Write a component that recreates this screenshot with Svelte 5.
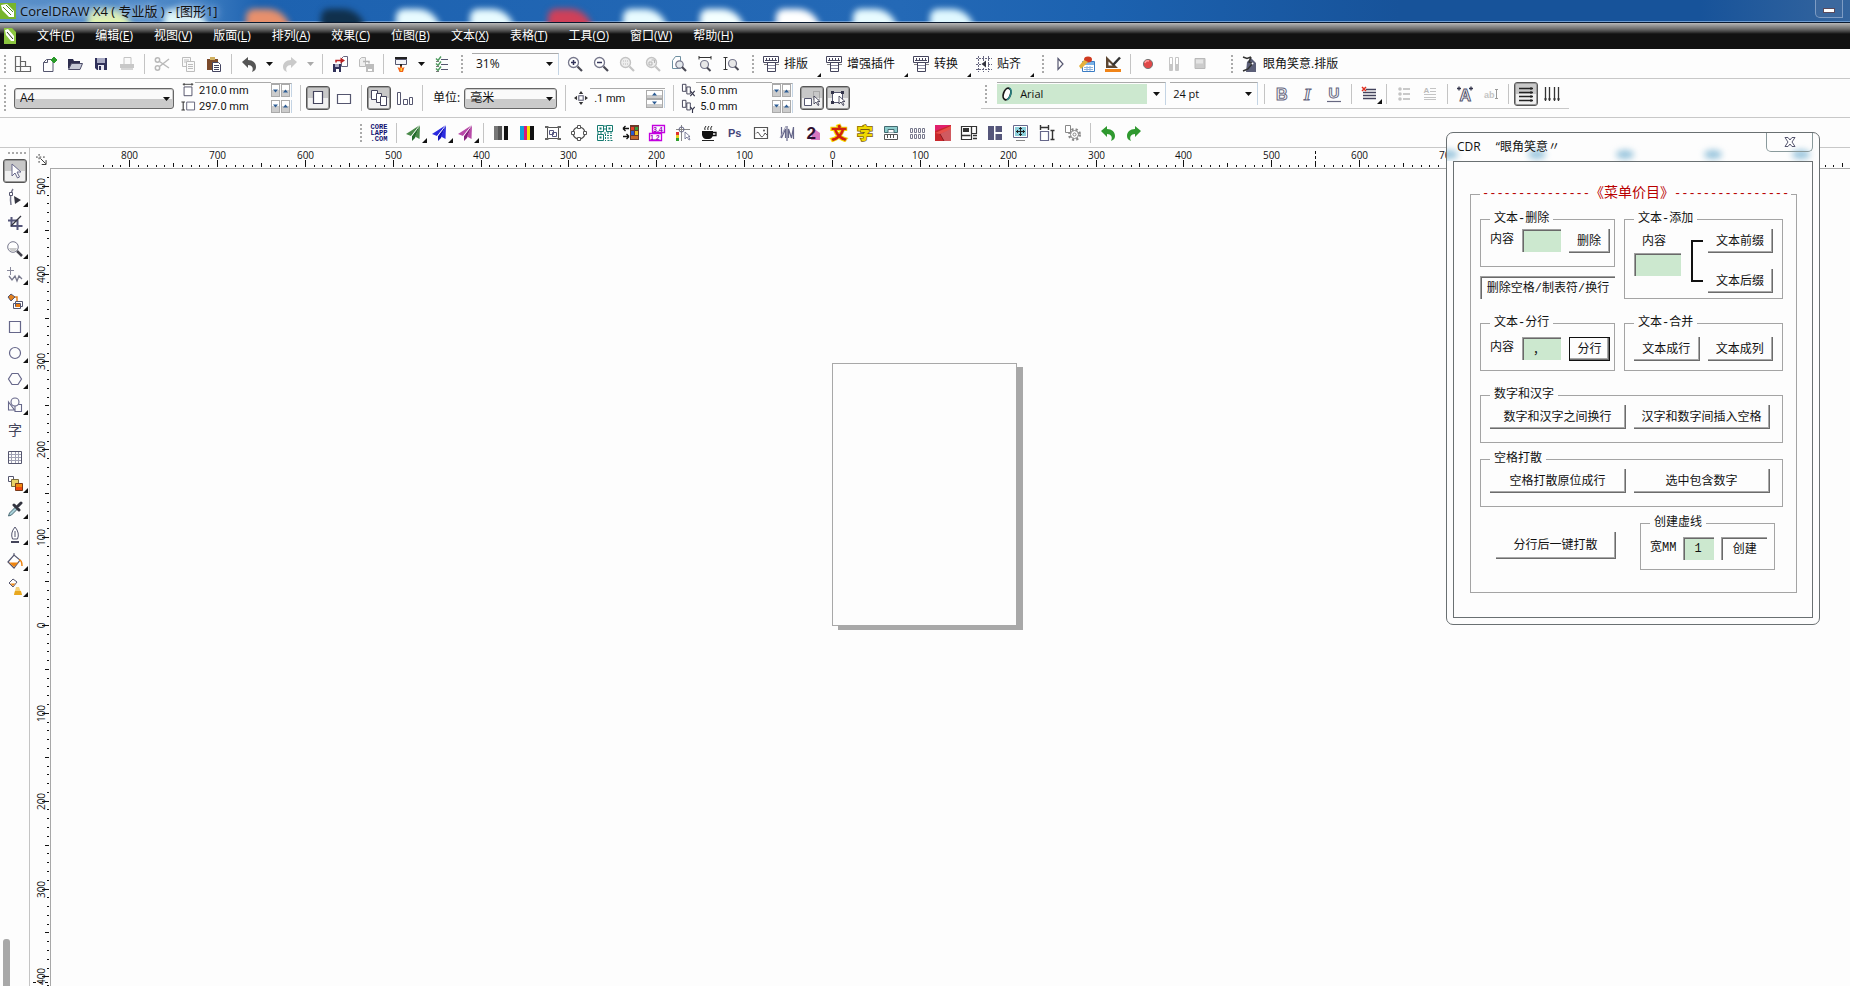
<script lang="ts">
    type Tool = { i?: string; t?: string; sep?: boolean; drop?: boolean; c?: boolean; on?: boolean };

    const sep: Tool = { sep: true };
    const drop: Tool = { drop: true };
    const b = (i: string, t: string, c = false, on = false): Tool => ({ i, t, c, on });

    const menus = [
        ['文件', 'F'], ['编辑', 'E'], ['视图', 'V'], ['版面', 'L'], ['排列', 'A'], ['效果', 'C'],
        ['位图', 'B'], ['文本', 'X'], ['表格', 'T'], ['工具', 'O'], ['窗口', 'W'], ['帮助', 'H']
    ];

    const standard = [
        b('layout', '版面'), b('new', '新建'), b('open', '打开'), b('save', '保存'), b('print', '打印'), sep,
        b('cut', '剪切'), b('copy', '复制'), b('paste', '粘贴'), sep,
        b('undo', '撤消'), drop, b('redo', '重做'), { ...drop, c: true }, sep,
        b('import', '导入'), b('export', '导出'), sep,
        b('launch', '应用程序启动器'), drop, b('checks', '选项')
    ];
    const zooms = [
        b('zoomin', '放大'), b('zoomout', '缩小'), b('zoomsel', '缩放选定范围'), b('zoomall', '缩放全部对象'),
        b('zoompage', '显示页面'), b('zoomw', '按页宽显示'), b('zoomh', '按页高显示')
    ];
    const macros = [['press', '排版'], ['press', '增强插件'], ['press', '转换'], ['snap', '贴齐']];
    const vba = [b('play', '播放'), b('vbedit', 'VBA 编辑器'), b('vbdesign', '设计模式'), sep, b('rec', '记录'), b('pause', '暂停'), b('stop', '停止')];
    const textTools = [
        sep, b('bold', '粗体'), b('italic', '斜体'), b('under', '下划线'), sep, b('align', '水平对齐', true), sep,
        b('bullets', '项目符号'), b('dropcap', '首字下沉'), sep, b('charfmt', '字符格式化'), b('edittext', '编辑文本'), sep,
        b('horz', '水平文本', false, true), b('vert', '垂直文本')
    ];
    const plugins = [
        b('planeg', '发送', true), b('planeb', '发送', true), b('planem', '发送', true), sep,
        b('grays', '灰度'), b('cmyk', 'CMYK'), b('group', '群组'), b('nodes', '节点'), b('qr', '二维码'), b('swap', '颜色替换'),
        b('nums', '编号'), b('guides', '辅助线'), b('coffee', '休息'), b('ps', 'Photoshop'), b('image', '图像'), b('mirror', '镜像'),
        b('two', '两色'), b('wen', '文字'), b('zi', '字体'), b('measure', '测量'), b('grid10', '阵列'), b('red', '色块'),
        b('impose', '拼版'), b('blocks', '排列'), b('screen', '屏幕'), b('size', '尺寸'), b('gear', '设置'), sep,
        b('gundo', '撤消'), b('gredo', '重做')
    ];
    const toolbox = [
        b('pick', '挑选', false, true), b('shape', '形状', true), b('crop', '裁剪', true), b('zoom', '缩放', true),
        b('freehand', '手绘', true), b('smartfill', '智能填充', true), b('rect', '矩形', true), b('ellipse', '椭圆形', true),
        b('polygon', '多边形', true), b('basic', '基本形状', true), b('texttool', '文本'), b('table', '表格'),
        b('blend', '交互式调和', true), b('dropper', '滴管', true), b('pen', '轮廓', true), b('bucket', '填充', true),
        b('ifill', '交互式填充', true)
    ];

    const lens = '<circle cx="6.5" cy="6.5" r="5" fill="#fff" stroke="#77788c" stroke-width="1.3"/><path d="M10.5 10.5l4.5 4.5" stroke="#4a4a55" stroke-width="2.2"/>';
    const lensOff = '<circle cx="6.5" cy="6.5" r="5" fill="#eee" stroke="#c4c4c4" stroke-width="1.4"/><path d="M10.5 10.5l4.5 4.5" stroke="#c4c4c4" stroke-width="2.2"/>';
    const plane = (a: string, d: string) => `<path d="M14 0L0 9l5 2z" fill="${a}"/><path d="M14 0L6 11v5l3-3z" fill="${d}"/><path d="M14 0L9 11.500l4.500 2.500z" fill="${a}"/><path d="M14 0L5.500 11" stroke="#fff" stroke-width=".7"/>`;
    const curve = 'M1 6l6-5v3c5 0 8 3 8 7 0 2-1 4-4 5 2-4 0-7-4-7v3z';

    const icons: Record<string, string> = {
        layout: '<path d="M.5 .5v15h15v-5h-10v-10zM5.500 5.500h5v5M.5 10.500h5v5" fill="none" stroke="#666" stroke-width="1.200"/>',
        new: '<path d="M2.500 6.500l3-3H12v12H2.500zM2.500 6.500h4v-3" fill="#fdfdfd" stroke="#55566f"/><path d="M10 4h6M13 1v6" stroke="#2a9a2a" stroke-width="2"/><path d="M11 2l4 4M15 2l-4 4" stroke="#2a9a2a"/>',
        open: '<path d="M1 13V3h5l1 2h6v3H5z" fill="#2d2d4e"/><path d="M1.500 13.500l3-6h11l-2.500 6z" fill="#c6c9d6" stroke="#4c4c68"/>',
        save: '<path d="M2 2h12v12H4l-2-2z" fill="#30315a"/><path d="M4 2h8v5H4z" fill="#a9abc4"/><path d="M5 9h6v5H5z" fill="#e8e8f2"/><path d="M6 10h2v4H6z" fill="#30315a"/>',
        print: '<path d="M5 1.500h7v7H5z" fill="#fafafa" stroke="#c4c4c4"/><path d="M1 8h14v4H1z" fill="#c8c8c8"/><path d="M2 13h12" stroke="#c8c8c8" stroke-width="1.500"/>',
        cut: '<g fill="none" stroke="#b9b9b9" stroke-width="1.500"><circle cx="3.500" cy="4" r="2.200"/><circle cx="3.500" cy="12" r="2.200"/><path d="M5.500 5.500L15 12M5.500 10.500L15 3"/></g>',
        copy: '<g fill="#fafafa" stroke="#bdbdbd"><path d="M2.500 1.500h8v9h-8z"/><path d="M6.500 5.500h8v10h-8z"/><path d="M4 4h5M4 6h2M8 8.500h5M8 10.500h5M8 12.500h5"/></g>',
        paste: '<path d="M1 3h11v11H1z" fill="#7b4a2b"/><path d="M4 1h5v3H4z" fill="#d0b060"/><path d="M6.500 6.500h6l2 2v7h-8z" fill="#fff" stroke="#444460"/><path d="M8 9.500h5M8 11.500h5M8 13.500h5" stroke="#444460"/>',
        undo: `<path d="${curve}" fill="#555"/>`,
        redo: `<path d="${curve}" fill="#cacaca" transform="translate(16 0) scale(-1 1)"/>`,
        gundo: `<path d="${curve}" fill="#2f992f"/>`,
        gredo: `<path d="${curve}" fill="#2f992f" transform="translate(16 0) scale(-1 1)"/>`,
        import: '<path d="M9.500 2.500l2-2h4v10H9.500z" fill="#fff" stroke="#666680"/><path d="M1 8h8v8H1z" fill="#30315a"/><path d="M3 8h4v3H3z" fill="#a9abc4"/><path d="M4 13h3v3H4z" fill="#fff"/><path d="M4 6.500V4.500h5" fill="none" stroke="#b22" stroke-width="1.500"/><path d="M8.500 1.500L13 4.500l-4.500 3z" fill="#b22"/>',
        export: '<path d="M1.500 3.500l2-2h4v9h-6z" fill="#eee" stroke="#bbb"/><path d="M8 8h8v8H8z" fill="#bdbdbd"/><path d="M10 13h4v2h-4z" fill="#fff"/><path d="M5 5.500h6v2" fill="none" stroke="#b5b5b5" stroke-width="1.500"/>',
        launch: '<path d="M2 1h12v2.500H2z" fill="#222"/><path d="M2.500 3.500h11v5h-11z" fill="#f4f4f8" stroke="#55566f"/><path d="M8 8v3" stroke="#222" stroke-width="2"/><path d="M4.500 11l2 1L8 9.500 9.500 12l2-1L10 16H6.500z" fill="#f2641a"/><path d="M7.500 12h1.500v3H7.500z" fill="#ffd23a"/>',
        checks: '<path d="M7 3.500h7M7 8.500h7M7 13.500h7" stroke="#55566f"/><path d="M2 2.500l2 2L7 .5M2 7.500l2 2 3-4M2 12.500l2 2 3-4" fill="none" stroke="#4d9a5d" stroke-width="1.400"/><path d="M2 5.500h3M2 10.500h3M2 15.500h3" stroke="#777"/>',
        zoomin: lens + '<path d="M4 6.500h5M6.500 4v5" stroke="#33345a" stroke-width="1.500"/>',
        zoomout: lens + '<path d="M4 6.500h5" stroke="#33345a" stroke-width="1.500"/>',
        zoomsel: lensOff + '<path d="M4 5h5M4 8h5" stroke="#bbb" stroke-dasharray="1 1"/>',
        zoomall: lensOff + '<path d="M4 6h3v3H4zM6.500 4h3v3" fill="none" stroke="#b5b5b5"/>',
        zoompage: '<path d="M1.500 4.500l3-4h5v12h-8z" fill="#fff" stroke="#6e8fa0"/><circle cx="8.500" cy="8.500" r="3.700" fill="#e4e8ec" stroke="#77788c" stroke-width="1.200"/><path d="M11 11l4 4" stroke="#4a4a55" stroke-width="2.200"/>',
        zoomw: '<path d="M2 1.500h12M2 0v3.500M14 0v3.500" stroke="#333"/><circle cx="7.500" cy="8.500" r="4" fill="#e8e8e8" stroke="#77788c" stroke-width="1.200"/><path d="M10 11.500l3.500 3.500" stroke="#4a4a55" stroke-width="2"/>',
        zoomh: '<path d="M2.500 1.500v12M.5 1.500h4M.5 13.500h4" stroke="#333"/><circle cx="9.500" cy="7.500" r="4" fill="#e8e8e8" stroke="#77788c" stroke-width="1.200"/><path d="M12 10.500l3.500 3.500" stroke="#4a4a55" stroke-width="2"/>',
        press: '<path d="M.5 .5h15v6H.5z" fill="#fff" stroke="#44445c"/><path d="M2 4.500h12M3.500 2v3M6.500 2v3M9.500 2v3M12.500 2v3" stroke="#44445c"/><path d="M4.500 6.500h8v9h-8z" fill="#fff" stroke="#44445c"/><path d="M5 9.500h7M5 12.500h7" stroke="#8a8aa0"/><path d="M1 8.500h3M13 8.500h3" stroke="#888"/>',
        snap: '<path d="M2.500 0v16M12.500 0v16M7.500 0v16M0 2.500h16M0 8.500h16M0 13.500h16" stroke="#666680" stroke-dasharray="2 1"/><path d="M5 5h6v6H5z" fill="#fff"/><path d="M10 4.500v7L5.500 8z" fill="#33343f"/>',
        play: '<path d="M5 2.500L10 8l-5 5.500z" fill="#fff" stroke="#55566f" stroke-width="1.200"/>',
        vbedit: '<path d="M3.500 5.500h12v10h-12z" fill="#fff" stroke="#3a7cc4"/><path d="M4 6h11v3H4z" fill="#7ab2e6"/><path d="M5 11.500h9M5 13.500h9M8 10v5M11 10v5" stroke="#8fb4dd"/><ellipse cx="9" cy="3.500" rx="4" ry="3" fill="#cf3a20"/><path d="M0 10l5-6 4 2-5 5-2 2z" fill="#e5b13c"/>',
        vbdesign: '<path d="M1 0v12h12zM3.500 5.500v4h4z" fill="#5c4632" fill-rule="evenodd"/><path d="M0 13h16v3H0z" fill="#f08418"/><path d="M8 9L15 1.500" stroke="#333" stroke-width="2.500"/>',
        rec: '<circle cx="8" cy="8" r="4.600" fill="#e04848" stroke="#777" stroke-width="1"/><path d="M5 7q1-3 4-2" stroke="#ff9c9c" fill="none" stroke-width="1.500"/>',
        pause: '<path d="M3.500 1.500h3v13h-3zM9.500 1.500h3v13h-3z" fill="#fff" stroke="#c6c6c6"/><path d="M4 8h2.500v6H4zM10 8h2.500v6H10z" fill="#c6c6c6"/>',
        stop: '<path d="M3 2.500h10v10H3z" fill="#ccc" stroke="#b9b9b9"/><path d="M4 3.500h7v4H4z" fill="#e4e4e4"/>',
        tag: '<path d="M5 6l4-4 5 5v9H4z" fill="#5c5f78"/><path d="M1 1l4 1.500L9 1M9 1l-2 5 3 1M1 15l5-2 4-5" stroke="#333" fill="none" stroke-width="1.500"/><circle cx="10.500" cy="7.500" r="1" fill="#fff"/>',
        wide: '<path d="M3.500 4.500h9v10h-9z" fill="#fff" stroke="#44445c"/><path d="M2 1.500h12M3.500 0v3M12.500 0v3" stroke="#333"/>',
        tall: '<path d="M6.500 3.500h9v9h-9z" fill="#fff" stroke="#55566f"/><path d="M2.500 3v10M.5 3.500h4M.5 12.500h4" stroke="#333" stroke-width="1.200"/>',
        portrait: '<path d="M3.500 1.500h9v12h-9z" fill="#fff" stroke="#44445c" stroke-width="1.200"/>',
        landscape: '<path d="M1.500 4.500h13v9h-13z" fill="#fff" stroke="#55566f" stroke-width="1.200"/>',
        pages: '<g fill="#fff" stroke="#44445c"><path d="M.5 .5h6v9h-6z"/><path d="M5.500 3.500h5v9h-5z"/><path d="M9.500 6.500h6v9h-6z"/></g>',
        align3: '<g fill="#fff" stroke="#55566f"><path d="M.5 2.500h3v12h-3z"/><path d="M6.500 9.500h4v5h-4z"/><path d="M12.500 7.500h3v7h-3z"/></g>',
        nudge: '<path d="M5.500 5.500h5v5h-5z" fill="#fff" stroke="#55566f" stroke-width="1.200"/><path d="M8 0l2.500 3.500h-5zM8 16l2.500-3.500h-5zM0 8l3.500-2.500v5zM16 8l-3.500-2.500v5z" fill="#333"/>',
        dupx: '<path d="M.5 1.500h4v8h-4zM5.500 4.500h4v8h-4z" fill="#fff" stroke="#33344a"/><path d="M9.500 9l5 6M14.500 9l-5 6" stroke="#33344a" stroke-width="1.300"/>',
        dupy: '<path d="M.5 1.500h4v8h-4zM5.500 4.500h4v8h-4z" fill="#fff" stroke="#33344a"/><path d="M9.500 9l2.500 3 2.500-3M12 12v4" fill="none" stroke="#33344a" stroke-width="1.300"/>',
        dynsel: '<path d="M.5 8.500h7v7h-7z" fill="#fff" stroke="#55566f"/><path d="M9.500 1.500h6v8h-6z" fill="none" stroke="#888" stroke-dasharray="1 1"/><path d="M10 6v8l2-2 2 3.500 1-.5-1.500-3.500H16z" fill="#fff" stroke="#33344a" stroke-width=".8"/>',
        bound: '<path d="M2.500 2.500h10v10h-10z" fill="#fff" stroke="#55566f"/><path d="M1 1h3v3H1zM11 1h3v3h-3zM1 11h3v3H1z" fill="#33344a"/><path d="M9 6v8l2-2 2 3.500 1-.5-1.500-3.500H15z" fill="#fff" stroke="#33344a" stroke-width=".8"/>',
        oglyph: '<ellipse cx="7" cy="8" rx="3.500" ry="6" transform="rotate(20 7 8)" fill="#fff" stroke="#1a1a1a" stroke-width="1.800"/><path d="M9.500 2c3 2 1.500 9-2.500 12" stroke="#2a8a8a" fill="none" stroke-width="1.500"/>',
        bold: '<text x="2" y="14" font-family="Liberation Sans" font-weight="bold" font-size="16" fill="#fff" stroke="#666780">B</text>',
        italic: '<text x="4" y="14" font-family="Liberation Serif" font-style="italic" font-weight="bold" font-size="17" fill="#fff" stroke="#666780">I</text>',
        under: '<text x="2.500" y="12" font-family="Liberation Sans" font-weight="bold" font-size="15" fill="#fff" stroke="#666780">U</text><path d="M1 15.500h14" stroke="#666780" stroke-width="1.200"/>',
        align: '<path d="M5 3.500h10M2 6.500h13M2 9.500h13M2 12.500h13" stroke="#44445c" stroke-width="1.500"/><path d="M1 1l4 4M5 1L1 5" stroke="#e03020" stroke-width="1.500"/>',
        bullets: '<path d="M7 3h7M7 8h7M7 13h7" stroke="#c9c9c9" stroke-width="2"/><g fill="#c4c4c4"><circle cx="4" cy="3" r="1.800"/><circle cx="4" cy="8" r="1.800"/><circle cx="4" cy="13" r="1.800"/></g>',
        dropcap: '<path d="M8 2.500h6M8 5.500h6M2 8.500h12M2 11.500h12M2 13.500h12" stroke="#c4c4c4"/><text x="1.500" y="7" font-family="Liberation Sans" font-weight="bold" font-size="8" fill="#bbb">A</text>',
        charfmt: '<text x="2.500" y="15" font-family="Liberation Sans" font-weight="bold" font-size="16" fill="#fff" stroke="#55566f">A</text><path d="M0 2.500h4M2 .5v4M12 2.500h4M14 .5v4" stroke="#33344a" stroke-width="1.300"/>',
        edittext: '<text x="1" y="12" font-family="Liberation Sans" font-weight="bold" font-size="9" fill="#c4c4c4">ab</text><path d="M13.500 3v10M12 3.500h3M12 12.500h3" stroke="#999"/>',
        horz: '<path d="M1 2.500h14M1 6.500h14M1 10.500h14M1 14.500h14" stroke="#222" stroke-width="1.300"/><path d="M13 1v3M13 5v3M13 9v3M13 13v3" stroke="#222"/>',
        vert: '<path d="M1.500 1v14M5.500 1v14M10.500 1v14M14.500 1v14" stroke="#333" stroke-width="1.300"/><path d="M0 13h3M4 13h3M9 13h3M13 13h3" stroke="#333"/>',
        planeg: plane('#4a8a4a', '#246b2c'),
        planeb: plane('#2b2be0', '#1414b8'),
        planem: plane('#b84aa8', '#86217c'),
        grays: '<path d="M1 1h5v14H1z" fill="#777"/><path d="M5 1h4v14H5z" fill="#555"/><path d="M9 1h2v14H9z" fill="#eee"/><path d="M11 1h4v14h-4z" fill="#111"/>',
        cmyk: '<path d="M1 1h4v14H1z" fill="#10a0d8"/><path d="M5 1h3v14H5z" fill="#d81878"/><path d="M8 1h3v14H8z" fill="#f4e400"/><path d="M11 1h4v14h-4z" fill="#111"/>',
        group: '<path d="M2.500 2.500h11v11h-11z" fill="#fff" stroke="#555"/><path d="M4.500 5.500h4v4h-4zM7.500 7.500h4v4h-4z" fill="#fff" stroke="#55567f"/><path d="M0 1h3.500v2H0zM12.500 1H16v2h-3.500zM0 13h3.500v2H0zM12.500 13H16v2h-3.500z" fill="#666"/>',
        nodes: '<circle cx="8" cy="8" r="6" fill="#fff" stroke="#555" stroke-width="1.200"/><g fill="#fff" stroke="#555"><path d="M6.500 .5h3v3h-3zM6.500 12.500h3v3h-3zM.5 6.500h3v3h-3zM12.500 6.500h3v3h-3z"/></g>',
        qr: '<g fill="none" stroke="#147a70"><path d="M.5 .5h6v6h-6zM9.500 .5h6v6h-6zM.5 9.500h6v6h-6z"/><path d="M2.500 3.500h2M11.500 3.500h2M2.500 12.500h2" stroke-width="2"/><path d="M8 0v5M0 8h6M7 8h9M8.500 9v7M10 10.500h6M10 13h6M10.500 15.500h6" stroke-dasharray="2 1"/></g>',
        swap: '<path d="M7 0h9v15H7z" fill="#6b3a2a"/><path d="M8 2h3v3H8z" fill="#e8402a"/><path d="M12 2h3v3h-3z" fill="#3a9a3a"/><path d="M8 6h3v4H8z" fill="#2a5ad0"/><path d="M12 6h3v4h-3z" fill="#f0c020"/><path d="M8 11h7v3H8z" fill="#c86a2a"/><path d="M0 3.500h6M0 3.500L2.500 1M0 3.500L2.500 6M0 11.500h6M6 11.500L3.500 9M6 11.500L3.500 14" stroke="#111" stroke-width="1.300" fill="none"/>',
        nums: '<path d="M3.500 .5h12v7h-12zM.5 8.500h12v7H.5z" fill="#fff" stroke="#c400e0" stroke-width="1.300"/><text x="4" y="7" font-family="Liberation Sans" font-weight="bold" font-size="7" fill="#a000c0">3.4</text><text x="1" y="15" font-family="Liberation Sans" font-weight="bold" font-size="7" fill="#a000c0">1.2</text>',
        guides: '<path d="M6.500 0v16M1 4.500h14" stroke="#888"/><circle cx="6.500" cy="4.500" r="2.500" fill="none" stroke="#66678a"/><path d="M1 7h3v3H1z" fill="#e03030"/><path d="M1 10h3v3H1z" fill="#e8d020"/><path d="M1 13h3v3H1z" fill="#30a030"/><path d="M10 7v7l2-2 2 3 1-.5-1.500-3H15z" fill="#fff" stroke="#66678a" stroke-width=".8"/>',
        coffee: '<path d="M1 6h11v4q-1 4-4 4H5q-3 0-4-4z" fill="#111"/><path d="M12 7.500h3v3h-4" fill="none" stroke="#111" stroke-width="1.300"/><path d="M1 15.500h12M4 5q-1-2 1-4M7 5q-1-2 1-4M10 5q-1-2 1-4" stroke="#222" fill="none"/>',
        ps: '<text x="1" y="12" font-family="Liberation Sans" font-weight="bold" font-size="11" fill="#44457a">Ps</text>',
        image: '<path d="M1.500 2.500h13v11h-13z" fill="#fff" stroke="#555" stroke-width="1.200"/><path d="M3 8.500q2-3 4 1.500t5-2l2 2" fill="none" stroke="#555"/><circle cx="11" cy="5.500" r="1" fill="#555"/>',
        mirror: '<path d="M2.500 2v11l4-9v9M8 1v15M9.500 13V4l3 9 2-11v12" fill="none" stroke="#66678a" stroke-width="1.200"/><path d="M1 13l6-12" stroke="#a0a0b8"/>',
        two: '<path d="M8 3l7 5v7H6z" fill="#d878c0"/><text x="1.500" y="14" font-family="Liberation Sans" font-weight="bold" font-size="17" fill="#301030">2</text>',
        wen: '<text x="0" y="14" font-family="Noto Sans CJK SC" font-weight="900" font-size="16" fill="#d02010" stroke="#f4d800" stroke-width="2" paint-order="stroke">文</text>',
        zi: '<text x="0" y="14" font-family="Noto Sans CJK SC" font-weight="900" font-size="16" fill="#f0d800" stroke="#7a5c10" stroke-width="1.500" paint-order="stroke">字</text>',
        measure: '<path d="M1.500 1.500h13v6h-13z" fill="#8ccccc" stroke="#446a70"/><path d="M5 7.500v-3h6v3" fill="#fff" stroke="#446a70"/><path d="M1.500 9.500h13v5h-13z" fill="#fff" stroke="#555"/><path d="M4.500 10v3M7.500 10v3M10.500 10v3" stroke="#555"/>',
        grid10: '<g fill="#fff" stroke="#77788c"><path d="M1.500 3.500h2v4h-2zM5.500 3.500h2v4h-2zM9.500 3.500h2v4h-2zM13.500 3.500h2v4h-2zM1.500 9.500h2v4h-2zM5.500 9.500h2v4h-2zM9.500 9.500h2v4h-2zM13.500 9.500h2v4h-2z"/></g>',
        red: '<path d="M0 0h16v16H0z" fill="#c8282c"/><path d="M0 0h16L0 6z" fill="#e0206c"/><path d="M0 8L16 1v4L5 9z" fill="#e8504a"/><path d="M5 9l11-5v12H9z" fill="#d05a60"/><path d="M5 9l4 7" stroke="#8a1a20"/>',
        impose: '<path d="M.5 1.500h15v7h-5v6H.5z" fill="#fff" stroke="#333" stroke-width="1.200"/><path d="M2 3h6v4H2z" fill="#333"/><path d="M10.500 2v6M.5 10.500h9M12 10.500h4M12 13.500h4" stroke="#333" stroke-width="1.300"/>',
        blocks: '<path d="M1 1h6v14H1zM8.500 1H15v6H8.500zM8.500 9H15v6H8.500z" fill="#55567a"/>',
        screen: '<path d="M.5 .5h14v12H.5z" fill="#fff" stroke="#66678a"/><path d="M2 2h11v9H2z" fill="#8cd0dc"/><path d="M7.500 2v9M3 6.500h9M6 3.500h3M6 9.500h3M4.500 5v3M10.500 5v3" stroke="#222"/><path d="M3 15.500h9" stroke="#888"/>',
        size: '<path d="M1.500 6.500h8v9h-8z" fill="#fff" stroke="#66678a" stroke-width="1.200"/><path d="M1 2.500h9M1.500 0v5M9.500 0v5M13.500 5v10M11.500 5.500h4M11.500 14.500h4" stroke="#333" stroke-width="1.400"/>',
        gear: '<circle cx="9.500" cy="9.500" r="5" fill="#fff" stroke="#888" stroke-width="3" stroke-dasharray="2 2"/><circle cx="9.500" cy="9.500" r="4" fill="#fff" stroke="#888"/><path d="M.5 .5h5v7h-5z" fill="#fff" stroke="#888"/><circle cx="9.500" cy="9.500" r="1.500" fill="none" stroke="#888"/>',
        pick: '<path d="M5 1v12l3-3 2.500 5 2-1L10 9h4z" fill="#fff" stroke="#66678a"/>',
        shape: '<path d="M6 0C3 4 3 9 4 16" fill="none" stroke="#77788c" stroke-width="1.500"/><path d="M2.500 3.500h3v3h-3z" fill="#fff" stroke="#55566f"/><path d="M7 7l7 4-6 4z" fill="#33343f"/>',
        crop: '<path d="M4.500 2v9h11M1 5.500h9.500V15" fill="none" stroke="#55567a" stroke-width="2"/><path d="M4 11L14 1" stroke="#33343f" stroke-width="1.200"/>',
        zoom: '<circle cx="6" cy="6" r="5.300" fill="#fff" stroke="#77788c"/><path d="M2 7h8q-1 3.500-4 3.500T2 7z" fill="#ccc"/><path d="M10 10l5 5" stroke="#44444e" stroke-width="2.500"/>',
        freehand: '<path d="M3.500 0v8M0 3.500h7" stroke="#88899c"/><path d="M2 9l3 4 3-4 2 5 2-5 3 3" fill="none" stroke="#77788c" stroke-width="1.300"/>',
        smartfill: '<path d="M1 4l3-3 4 3-4 4z" fill="#e08020" stroke="#55566f"/><path d="M8 4h2v5" fill="none" stroke="#e08020" stroke-width="1.500"/><path d="M8.500 8.500h7v5h-7zM6.500 10.500h7v5h-7z" fill="#fff" stroke="#55566f"/><path d="M9 11h4v3H9z" fill="#e87a10"/>',
        rect: '<path d="M2.500 2.500h11v11h-11z" fill="#fdfdfd" stroke="#66678a" stroke-width="1.200"/>',
        ellipse: '<circle cx="8" cy="8" r="5.500" fill="#fdfdfd" stroke="#66678a" stroke-width="1.200"/>',
        polygon: '<path d="M5 2.500h6L14.500 8 11 13.500H5L1.500 8z" fill="#fdfdfd" stroke="#66678a" stroke-width="1.200"/>',
        basic: '<g fill="#fdfdfd" stroke="#66678a" stroke-width="1.100"><path d="M1.500 5l6 8h-6z"/><path d="M8 7.500h6.500v7H8z"/><circle cx="8" cy="5" r="4"/></g>',
        texttool: '<text x="1" y="12" font-family="Noto Sans CJK SC" font-size="14" fill="#44455a">字</text>',
        table: '<path d="M1.500 2.500h13v12h-13z" fill="none" stroke="#55566f"/><path d="M2 5.500h12M2 8.500h12M2 11.500h12M4.500 3v11M8.500 3v11M11.500 3v11" fill="none" stroke="#a0a1b4"/>',
        blend: '<path d="M1.500 1.500h5v5h-5z" fill="#fff" stroke="#55566f"/><path d="M4.500 4.500h7v7h-7z" fill="#e8d468" stroke="#7a6a3a"/><path d="M8.500 8.500h7v7h-7z" fill="#f04a10" stroke="#7a3a1a"/><path d="M9 9h6v3H9z" fill="#f08a10"/>',
        dropper: '<path d="M1.500 15l1-3 6-6 2 2-6 6z" fill="#a8d0d8" stroke="#4a6a74"/><path d="M7 4l5 5M10 6l4-4" stroke="#33343f" stroke-width="3" stroke-linecap="round"/>',
        pen: '<path d="M8 0q5 6 2.500 12h-5Q3 6 8 0z" fill="#fff" stroke="#55566f"/><path d="M8 4v6" stroke="#55566f"/><path d="M4 14h8v2H4z" fill="#44455a"/>',
        bucket: '<path d="M1 9l6-7 6 5-6 8z" fill="#fff" stroke="#55566f" stroke-width="1.200"/><path d="M2 9.500h9.500L7 14z" fill="#ee8410"/><path d="M12 7q3 0 3 6" fill="none" stroke="#ee8410" stroke-width="1.500"/><path d="M7 2V0" stroke="#55566f"/>',
        ifill: '<path d="M2 4l4-4 4 3-4 5z" fill="#fff" stroke="#55566f"/><path d="M3 4.500h5.500L6 7z" fill="#ee8410"/><path d="M9 8h3l3 8H7z" fill="#f6d27a"/><path d="M8 12h6l1 4H7z" fill="#e8a820"/>',
        origin: '<path d="M0 3.500h12M3.500 0v12" stroke="#222" stroke-dasharray="2 2"/><path d="M5 5l6 6M11.500 7v5h-5" stroke="#222" fill="none"/>'
    };

    // ruler marks, one every 10 mm; zero sits on the page's bottom left corner
    const step = 8.785;
    const xZero = 781;
    const yZero = 456;
    let width = $state(0);
    let height = $state(0);

    const range = (from: number, to: number) => Array.from({ length: to - from + 1 }, (_, k) => from + k);
    const hMarks = $derived(
        range(-83, Math.floor((width - xZero) / step)).map((n) => ({ n, p: Math.round(xZero + n * step) + 0.5 }))
    );
    const vMarks = $derived(
        range(-Math.floor((height - yZero) / step), 51).map((n) => ({ n, p: Math.round(yZero - n * step) + 0.5 }))
    );
    const len = (n: number) => (n % 10 === 0 ? 7 : n % 5 === 0 ? 4 : 2);

    const glows = [
        ['#e4f4b0', 110], ['#e4f8f8', 186], ['#e8906c', 268], ['#10304c', 343], ['#e8fbff', 418],
        ['#e8fbff', 492], ['#d04058', 570], ['#e8fbff', 645], ['#f4ffff', 722], ['#ffffff', 798], ['#e8fbff', 875], ['#e0f8ff', 952]
    ];

    let paper = $state('A4');
    let unit = $state('毫米');
    let zoom = $state('31%');
    let removeText = $state('');
    let addText = $state('');
    let splitText = $state('，');
    let dash = $state('1');
</script>

{#snippet icon(name: string)}
    <svg class="icon" viewBox="0 0 16 16" aria-hidden="true">{@html icons[name]}</svg>
{/snippet}

{#snippet caret()}
    <svg class="caret" viewBox="0 0 7 4" aria-hidden="true"><path d="M0 0h7L3.500 4z" /></svg>
{/snippet}

{#snippet tools(list: Tool[])}
    {#each list as t}
        {#if t.sep}
            <span class="sep"></span>
        {:else if t.drop}
            <button class="drop" class:off={t.c} aria-label="更多">{@render caret()}</button>
        {:else}
            <button class="tool" class:on={t.on} class:corner={t.c} aria-label={t.t}>{@render icon(t.i ?? '')}</button>
        {/if}
    {/each}
{/snippet}

{#snippet spin()}
    <span class="spin">
        <button aria-label="减少"><svg viewBox="0 0 7 4"><path d="M0 0h7L3.500 4z" /></svg></button>
        <button aria-label="增加"><svg viewBox="0 0 7 4"><path d="M0 4h7L3.500 0z" /></svg></button>
    </span>
{/snippet}

<div class="app">
    <header class="title">
        {#each glows as [color, x]}
            <i class="glow" style="left: {x}px; background: {color}"></i>
        {/each}
        <svg class="logo" viewBox="0 0 16 16" aria-hidden="true"><path d="M0 0h16v16H0z" fill="#76b52c" /><path d="M1 2l6-1 7 7v6H9L2 7z" fill="#fff" /><path d="M3 4l8 8M6 2l7 7" stroke="#4d8a1c" /></svg>
        <h1>CorelDRAW X4 ( 专业版 ) - [图形1]</h1>
        <button class="min" aria-label="最小化"></button>
    </header>

    <nav class="menu">
        <svg class="doc" viewBox="0 0 12 16" aria-hidden="true"><path d="M0 0h8l4 4v12H0z" fill="#8cc63f" /><path d="M1 2l3-1 6 7v5H7L2 7z" fill="#fff" /><path d="M3 4l6 7" stroke="#2c3a1a" /></svg>
        {#each menus as [name, key]}
            <button>{name}(<u>{key}</u>)</button>
        {/each}
    </nav>

    <div class="bar">
        <span class="grip"></span>
        {@render tools(standard)}
        <span class="grip near"></span>
        <label class="field zoomsel">
            <select bind:value={zoom} aria-label="缩放级别"><option>31%</option><option>100%</option></select>
            {@render caret()}
        </label>
        {@render tools(zooms)}
        <span class="grip next"></span>
        {#each macros as [i, name]}
            <button class="macro">{@render icon(i)}{name}</button>
        {/each}
        <span class="grip next"></span>
        {@render tools(vba)}
        <span class="grip far"></span>
        <button class="macro plain">{@render icon('tag')}眼角笑意.排版</button>
    </div>

    <div class="bar props">
        <span class="grip tall"></span>
        <label class="combo paper">
            <select bind:value={paper} aria-label="纸张类型"><option>A4</option><option>A3</option></select>
            {@render caret()}
        </label>
        <div class="pair">
            <label>{@render icon('wide')}<input value="210.0 mm" aria-label="宽度" />{@render spin()}</label>
            <label>{@render icon('tall')}<input value="297.0 mm" aria-label="高度" />{@render spin()}</label>
        </div>
        {@render tools([sep, b('portrait', '纵向', false, true), b('landscape', '横向'), sep, b('pages', '所有页面', false, true), b('align3', '当前页面'), sep])}
        <label class="unit" for="unit">单位:</label>
        <div class="combo">
            <select id="unit" bind:value={unit}><option>毫米</option><option>英寸</option></select>
            {@render caret()}
        </div>
        <span class="sep wide"></span>
        <label class="nudge">
            {@render icon('nudge')}
            <span class="box"><input value=".1 mm" aria-label="微调偏移" />
                <span class="spin up">
                    <button aria-label="增加"><svg viewBox="0 0 7 4"><path d="M0 4h7L3.500 0z" /></svg></button>
                    <button aria-label="减少"><svg viewBox="0 0 7 4"><path d="M0 0h7L3.500 4z" /></svg></button>
                </span>
            </span>
        </label>
        <span class="sep wide"></span>
        <div class="pair">
            <label>{@render icon('dupx')}<input value="5.0 mm" aria-label="再制距离 X" />{@render spin()}</label>
            <label>{@render icon('dupy')}<input value="5.0 mm" aria-label="再制距离 Y" />{@render spin()}</label>
        </div>
        <span class="space"></span>
        {@render tools([b('dynsel', '动态选择', false, true), b('bound', '视为已填充', false, true)])}

        <div class="textbar">
            <span class="grip"></span>
            <label class="field font">
                <span class="green">{@render icon('oglyph')}<select aria-label="字体"><option>Arial</option></select></span>
                {@render caret()}
            </label>
            <label class="field pt">
                <select aria-label="字号"><option>24 pt</option></select>
                {@render caret()}
            </label>
            {@render tools(textTools)}
        </div>
    </div>

    <div class="bar plugins">
        <span class="grip"></span>
        <button class="tool corelapp">CORE<br />LAPP<br />.COM</button>
        {@render tools([sep, ...plugins])}
    </div>

    <main>
        <aside class="toolbox">
            <span class="grip flat"></span>
            {@render tools(toolbox)}
            <span class="scroll"></span>
        </aside>
        <div class="origin">{@render icon('origin')}</div>
        <svg class="hruler" aria-hidden="true">
            {#each hMarks as m}
                <path d="M{m.p} {19 - len(m.n)}V19" />
                {#if m.n % 10 === 0}<text x={m.p} y="11">{Math.abs(m.n * 10)}</text>{/if}
            {/each}
            <path d="M1264.500 3V19" stroke-dasharray="3 2" />
        </svg>
        <svg class="vruler" aria-hidden="true">
            {#each vMarks as m}
                <path d="M{19 - len(m.n)} {m.p}H19" />
                {#if m.n % 10 === 0}<text transform="translate(15 {m.p}) rotate(-90)">{Math.abs(m.n * 10)}</text>{/if}
            {/each}
            <path d="M3 813.500H19" stroke-dasharray="3 3" />
        </svg>
        <section class="canvas" bind:clientWidth={width} bind:clientHeight={height}><div class="page"></div></section>
    </main>

    <section class="dialog" aria-label="CDR 眼角笑意">
        <header>
            {#each [6, 94, 182, 270, 358] as x}<i style="left: {x}px"></i>{/each}
            <h2>CDR <span>“眼角笑意〃</span></h2>
            <button class="close" aria-label="关闭"><svg viewBox="0 0 12 10"><path d="M1 .5h3l2 2.500 2-2.500h3L8 5l3 4.500H8L6 7 4 9.500H1L4 5z" fill="#fff" stroke="#55566f" /></svg></button>
        </header>
        <div class="client">
            <fieldset class="frame">
                <legend><span>---------------</span>《菜单价目》<span>----------------</span></legend>
                <div class="cols">
                    <div class="left">
                        <fieldset>
                            <legend>文本-删除</legend>
                            <label for="rm">内容</label><input id="rm" bind:value={removeText} /><button>删除</button>
                        </fieldset>
                        <button class="sunk">删除空格/制表符/换行</button>
                    </div>
                    <fieldset class="add">
                        <legend>文本-添加</legend>
                        <div class="stack"><label for="add">内容</label><input id="add" bind:value={addText} /></div>
                        <span class="bracket"></span>
                        <div class="stack far"><button>文本前缀</button><button>文本后缀</button></div>
                    </fieldset>
                </div>
                <div class="cols low">
                    <fieldset>
                        <legend>文本-分行</legend>
                        <label for="split">内容</label><input id="split" bind:value={splitText} /><button class="default">分行</button>
                    </fieldset>
                    <fieldset>
                        <legend>文本-合并</legend>
                        <button>文本成行</button><button>文本成列</button>
                    </fieldset>
                </div>
                <fieldset class="even">
                    <legend>数字和汉字</legend>
                    <button>数字和汉字之间换行</button><button>汉字和数字间插入空格</button>
                </fieldset>
                <fieldset class="even tight">
                    <legend>空格打散</legend>
                    <button>空格打散原位成行</button><button>选中包含数字</button>
                </fieldset>
                <div class="last">
                    <button>分行后一键打散</button>
                    <fieldset>
                        <legend>创建虚线</legend>
                        <label for="dash">宽MM</label><input id="dash" bind:value={dash} /><button class="sunk">创建</button>
                    </fieldset>
                </div>
            </fieldset>
        </div>
    </section>
</div>

<style>
    :global(body) {
        margin: 0;
        background: #fdfdfd;
    }

    .app {
        position: relative;
        display: flex;
        flex-direction: column;
        height: 100vh;
        overflow: hidden;
        background: #fdfdfd;
        color: #111;
        font: 12px/16px "Open Sans", "Noto Sans CJK SC", sans-serif;
    }

    button, input, select {
        box-sizing: border-box;
        margin: 0;
        padding: 0;
        border: 0;
        background: none;
        color: inherit;
        font: inherit;
        appearance: none;
        border-radius: 0;
        min-width: 0;
    }

    .icon {
        display: block;
        flex: none;
        width: 16px;
        height: 16px;
        overflow: visible;
    }

    .caret {
        flex: none;
        width: 7px;
        height: 4px;
        fill: #111;
    }

    /* title bar */
    .title {
        position: relative;
        display: flex;
        align-items: center;
        height: 22px;
        flex: none;
        overflow: hidden;
        background: linear-gradient(90deg, #5b8fc8 0, #4a86c6 180px, #1d62b0 260px, #2469b6 900px, #1c62b0 1100px, #17539a 1400px, #17539a 1700px, #35659e 100%);
        border-bottom: 1px solid #0a1a30;
        box-shadow: inset 0 -1px #6d9bd0;
    }

        .title h1 {
            position: relative;
            margin: 0 0 0 4px;
            font-size: 13px;
            font-weight: 400;
            text-shadow: 0 0 6px #bcd4ee, 0 0 10px #a8c8ea;
        }

    .glow {
        position: absolute;
        top: 9px;
        width: 44px;
        height: 22px;
        margin-left: -22px;
        border-radius: 8px 22px 0 0;
        filter: blur(3px);
    }

    .logo {
        position: relative;
        width: 16px;
        height: 16px;
    }

    .min {
        position: relative;
        align-self: flex-start;
        width: 28px;
        height: 18px;
        margin-left: auto;
        margin-right: 7px;
        border: 1px solid #7e9cc4;
        border-top: 0;
        border-radius: 0 0 0 5px;
        background: #3c689e;
    }

        .min::after {
            content: "";
            display: block;
            width: 10px;
            height: 3px;
            margin: 4px auto 0;
            background: #fff;
            border: 1px solid #5a4a5c;
        }

    .menu {
        display: flex;
        align-items: center;
        gap: 21px;
        height: 26px;
        flex: none;
        padding-left: 4px;
        background: linear-gradient(#b8b8b8 0, #909090 3px, #6c6c6c 6px, #3a3a3a 9px, #111 11px);
        color: #fff;
    }

    .doc {
        width: 12px;
        height: 16px;
    }

    /* toolbars */
    .bar {
        display: flex;
        align-items: center;
        height: 29px;
        flex: none;
        border-bottom: 1px solid #c8c8c8;
    }

    .props {
        height: 38px;
    }

    .plugins {
        padding-left: 356px;
    }

    .grip {
        flex: none;
        width: 2px;
        height: 18px;
        margin: 0 4px;
        background: repeating-linear-gradient(#aaa 0 2px, transparent 2px 4px);
    }

        .grip.near {
            margin-left: 6px;
        }

        .grip.next {
            margin-left: 8px;
        }

        .grip.far {
            margin-left: 18px;
        }

        .grip.tall {
            height: 26px;
        }

        .grip.flat {
            width: 18px;
            height: 2px;
            margin: 4px 0 4px 6px;
            background: repeating-linear-gradient(90deg, #aaa 0 2px, transparent 2px 4px);
        }

    .sep {
        flex: none;
        width: 1px;
        height: 20px;
        margin: 0 4px;
        background: #c4c4c4;
    }

    .props .sep {
        height: 26px;
    }

    .props .textbar .sep {
        height: 20px;
    }

    .sep.wide {
        margin: 0 8px;
    }

    .tool {
        position: relative;
        display: grid;
        place-items: center;
        flex: none;
        width: 26px;
        height: 26px;
    }

        .tool.on::before {
            content: "";
            position: absolute;
            inset: 1px;
            border: 1px solid #555;
            border-radius: 3px;
            background: linear-gradient(#c8c8c8 50%, #f0f0f0 50%);
            box-shadow: inset 0 0 0 1px #999;
        }

        .tool .icon {
            position: relative;
        }

        .tool.corner::after {
            content: "";
            position: absolute;
            right: 0;
            bottom: 3px;
            border: solid;
            border-width: 0 0 5px 5px;
            border-color: transparent transparent #111;
        }

    .drop {
        display: grid;
        place-items: center;
        flex: none;
        width: 15px;
        height: 26px;
    }

        .drop.off :global(svg) {
            fill: #aaa;
        }

    .corelapp {
        color: #101070;
        font: bold 7px/6px "Liberation Mono", monospace;
    }

    .field {
        display: flex;
        flex: none;
        align-items: center;
        box-sizing: border-box;
        height: 22px;
        padding-right: 5px;
        border-top: 1px solid #aaa;
        border-right: 1px solid #c4d4e4;
    }

        .field select {
            flex: 1;
            height: 18px;
            padding-left: 4px;
        }

    .zoomsel {
        width: 87px;
        margin: 0 3px 0 5px;
    }

    .macro {
        position: relative;
        display: flex;
        align-items: center;
        gap: 5px;
        height: 26px;
        padding: 0 13px 0 5px;
    }

        .macro:not(.plain)::after {
            content: "";
            position: absolute;
            right: 0;
            bottom: 0;
            border: solid;
            border-width: 0 0 4px 4px;
            border-color: transparent transparent #111;
        }

    .combo {
        position: relative;
        width: 93px;
        height: 21px;
        flex: none;
    }

        .combo select {
            width: 100%;
            height: 100%;
            padding-left: 5px;
            border: 1px solid #666;
            border-radius: 3px;
            box-shadow: inset 0 0 0 1px #ccc;
            background: linear-gradient(#fafafa 50%, #cacaca 50%);
        }

        .combo .caret {
            position: absolute;
            right: 4px;
            top: 9px;
            pointer-events: none;
        }

    .paper {
        width: 160px;
        margin: 0 7px 0 4px;
    }

        .paper select {
            font-family: "Open Sans", sans-serif;
        }

    .pair {
        display: flex;
        flex-direction: column;
        flex: none;
    }

        .pair label {
            display: flex;
            align-items: center;
            height: 16px;
            width: 111px;
            font: 11px/14px Roboto, sans-serif;
        }

        .pair .icon {
            width: 14px;
            height: 14px;
        }

        .pair input {
            flex: 1;
            height: 16px;
            padding-left: 4px;
        }

        .pair label:first-child input, .pair label:first-child .spin {
            border-top: 1px solid #aaa;
        }

    .spin {
        display: flex;
        gap: 1px;
        padding-right: 1px;
        border-right: 1px solid #c4d4e4;
    }

        .spin button {
            display: grid;
            place-items: center;
            width: 9px;
            height: 13px;
            border: 1px solid #aaa;
            background: linear-gradient(#fff 50%, #ccc 50%);
        }

        .spin svg {
            width: 5px;
            height: 4px;
            fill: #2c5c94;
        }

    .pair + :global(.sep) {
        margin-left: 8px;
    }

    .unit {
        flex: none;
        margin: 0 4px 0 6px;
    }

    .nudge {
        display: flex;
        flex: none;
        align-items: center;
        gap: 2px;
        font: 11px/14px Roboto, sans-serif;
    }

        .nudge .icon {
            width: 14px;
            height: 14px;
        }

    .box {
        display: flex;
        align-items: center;
        width: 75px;
        height: 20px;
        border-top: 1px solid #aaa;
    }

        .box input {
            flex: 1;
            height: 16px;
            padding-left: 4px;
        }

    .spin.up {
        flex-direction: column;
        gap: 0;
    }

        .spin.up button {
            width: 17px;
            height: 9px;
        }

    .space {
        flex: none;
        width: 6px;
    }

    .textbar {
        display: flex;
        flex: none;
        align-items: center;
        align-self: flex-start;
        height: 29px;
        margin-left: 130px;
        padding-right: 4px;
        border-bottom: 1px solid #c8c8c8;
    }

        .textbar .field {
            height: 23px;
        }

    .font {
        width: 169px;
        margin: 0 4px 0 6px;
    }

    .green {
        display: flex;
        align-items: center;
        flex: 1;
        height: 20px;
        margin-right: 6px;
        padding-left: 3px;
        background: #cce8cf;
    }

    .pt {
        width: 88px;
        margin-right: 2px;
    }

        .pt select {
            padding-left: 3px;
        }

    .font, .pt {
        font-size: 11px;
    }

    /* work area */
    main {
        display: grid;
        grid-template: 20px 1fr / 30px 20px 1fr;
        flex: 1;
        min-height: 0;
    }

    .toolbox {
        grid-row: 1 / 3;
        display: flex;
        flex-direction: column;
        align-items: flex-start;
        box-sizing: border-box;
        padding-left: 2px;
        border-right: 1px solid #c4c4c4;
        min-height: 0;
        overflow: hidden;
    }

    .scroll {
        flex: 1;
        width: 7px;
        margin: 339px 0 0 1px;
        border-radius: 3px 3px 0 0;
        background: #a8a8a8;
    }

    .origin {
        display: grid;
        place-items: end;
    }

        .origin .icon {
            width: 14px;
            height: 14px;
        }

    .hruler, .vruler {
        display: block;
        width: 100%;
        height: 100%;
        min-width: 0;
        min-height: 0;
        overflow: hidden;
        stroke: #111;
        box-sizing: border-box;
    }

    .hruler {
        padding-left: 1px;
    }

    .vruler {
        padding-top: 1px;
    }

        .hruler text, .vruler text {
            stroke: none;
            fill: #111;
            font: 10px "Open Sans", sans-serif;
            text-anchor: middle;
        }

    .canvas {
        position: relative;
        border-top: 1px solid #a8a8a8;
        border-left: 1px solid #a8a8a8;
        overflow: hidden;
    }

    .page {
        position: absolute;
        left: 781px;
        top: 194px;
        width: 183px;
        height: 261px;
        border: 1px solid #a8a8a8;
        background: #fdfdfd;
        box-shadow: 6px 4px #a8a8a8;
    }

    /* floating macro window */
    .dialog {
        position: absolute;
        right: 30px;
        top: 132px;
        width: 372px;
        border: 1px solid #6a7072;
        border-radius: 7px;
        background: #fdfdfd;
        font-family: "Liberation Mono", "Noto Sans CJK SC", monospace;
    }

        .dialog header {
            position: relative;
            display: flex;
            height: 28px;
            overflow: hidden;
            border-radius: 6px 6px 0 0;
        }

        .dialog header i {
            position: absolute;
            top: 17px;
            width: 18px;
            height: 9px;
            margin-left: -13px;
            border-radius: 50%;
            background: #98c4dc;
            filter: blur(3px);
        }

        .dialog h2 {
            position: relative;
            margin: 6px 0 0 10px;
            font: 12px/16px "Open Sans", "Noto Sans CJK SC", sans-serif;
        }

        .dialog h2 span {
            margin-left: 12px;
        }

    .close {
        position: relative;
        display: grid;
        place-items: center;
        width: 47px;
        height: 19px;
        margin: 0 6px 0 auto;
        border: 1px solid #8a9a9c;
        border-top: 0;
        border-radius: 0 0 5px 5px;
    }

        .close svg {
            width: 12px;
            height: 10px;
        }

    .client {
        margin: 0 6px 6px;
        padding: 21px 15px 24px 16px;
        border: 1px solid #6a7072;
    }

    fieldset {
        display: flex;
        align-items: flex-start;
        gap: 8px;
        box-sizing: border-box;
        min-width: 0;
        margin: 0;
        padding: 1px 9px 13px;
        border: 1px solid #a4a4a4;
    }

    legend {
        padding: 0 4px;
        line-height: 17px;
    }

    .frame {
        display: block;
        padding: 6px 13px 22px 9px;
    }

        .frame > legend {
            padding: 0 2px;
            color: #b80000;
            font-size: 14px;
            line-height: 21px;
            white-space: nowrap;
        }

        .frame > legend span {
            font-size: 12px;
        }

    .cols {
        display: grid;
        grid-template-columns: 135px 1fr;
        gap: 9px;
        margin-bottom: 16px;
    }

    .left {
        display: flex;
        flex-direction: column;
        gap: 9px;
    }

    fieldset label {
        flex: none;
        line-height: 22px;
    }

    fieldset input {
        flex: none;
        width: 39px;
        height: 23px;
        padding-left: 10px;
        border: solid #a0a0a0;
        border-width: 1px 0 0 1px;
        box-shadow: inset 1px 1px #696969;
        background: #cce8cf;
    }

    fieldset button {
        flex: 1;
        height: 24px;
        padding-top: 2px;
        white-space: nowrap;
        border: solid #6c6c6c;
        border-width: 0 1px 1px 0;
        box-shadow: inset -1px -1px #a8a8a8;
    }

        fieldset button.sunk {
            height: 23px;
            border: solid #a0a0a0;
            border-width: 1px 0 0 1px;
            box-shadow: inset 1px 1px #696969;
        }

    .left > .sunk {
        flex: none;
    }

    fieldset button.default {
        border: 1px solid #111;
        box-shadow: inset -1px -1px #6c6c6c, inset -2px -2px #a8a8a8;
    }

    .low fieldset {
        padding-top: 5px;
        padding-bottom: 9px;
    }

    .left fieldset, .cols > fieldset:first-child {
        padding-right: 4px;
    }

    .add {
        gap: 10px;
        padding-bottom: 5px;
    }

        .add input {
            width: 47px;
        }

    .stack {
        display: flex;
        flex-direction: column;
    }

        .stack label {
            padding: 2px 0 0 8px;
        }

        .stack.far {
            flex: 1;
            gap: 16px;
            margin-left: -5px;
        }

        .stack.far button {
            flex: none;
        }

    .bracket {
        width: 10px;
        height: 38px;
        margin-top: 11px;
        border: 2px solid #111;
        border-right: 0;
    }

    .even {
        padding-right: 12px;
    }

        .even button {
            flex: 1 1 0;
        }

    .even.tight {
        margin: 8px 0;
    }

    .last {
        display: flex;
        align-items: flex-start;
        justify-content: space-between;
        padding: 0 8px 0 16px;
    }

        .last > button {
            flex: none;
            width: 120px;
            height: 27px;
            margin-top: 17px;
        }

        .last fieldset {
            gap: 7px;
            width: 135px;
            padding: 5px 7px 9px 9px;
        }

        .last input {
            width: 31px;
        }
</style>
